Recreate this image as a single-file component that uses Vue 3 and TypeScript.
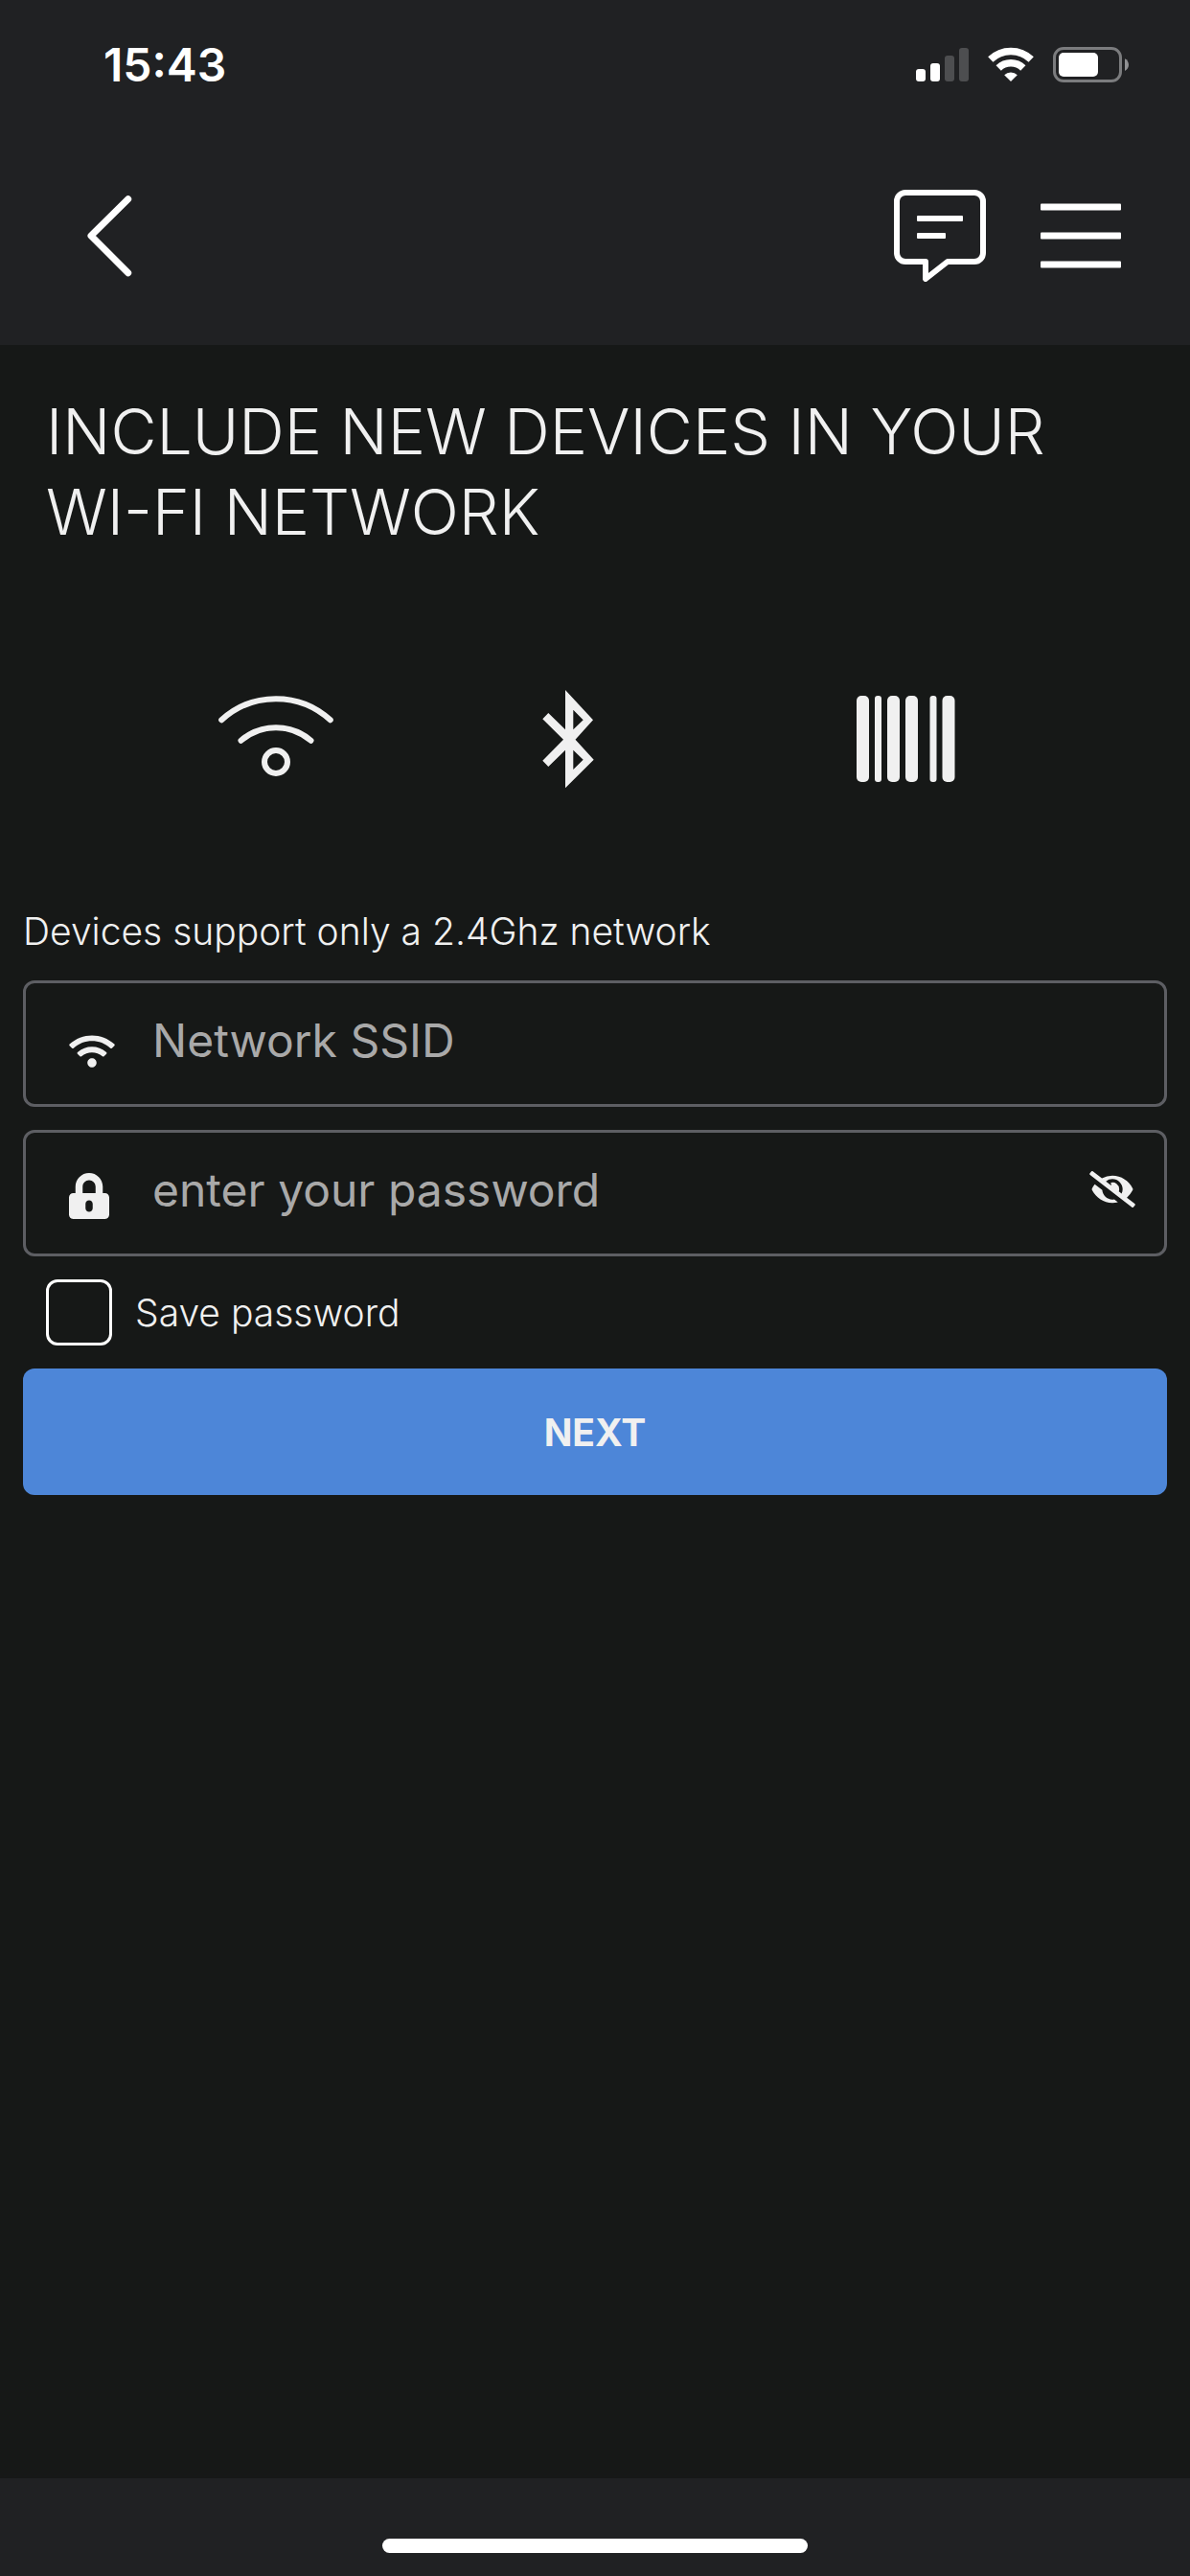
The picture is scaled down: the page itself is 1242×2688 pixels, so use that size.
<script setup lang="ts">
import { ref } from 'vue'

interface SignalBar {
  x: number
  height: number
  active: boolean
}

interface Stripe {
  x: number
  width: number
}

const signalBars: SignalBar[] = [
  { x: 0, height: 13, active: true },
  { x: 15, height: 19, active: true },
  { x: 30, height: 27, active: false },
  { x: 45, height: 35, active: false },
]

const stripes: Stripe[] = [
  { x: 0, width: 13 },
  { x: 19, width: 7 },
  { x: 32, width: 13 },
  { x: 51, width: 13 },
  { x: 76.5, width: 7 },
  { x: 89.5, width: 13 },
]

const ssid = ref('')
const password = ref('')
const savePassword = ref(false)
const passwordVisible = ref(false)
</script>

<template>
  <div class="screen">
    <header class="top">
      <div class="status">
        <time class="clock">15:43</time>
        <div class="indicators">
          <svg class="signal" width="55" height="38" viewBox="0 0 55 38" aria-hidden="true">
            <rect
              v-for="bar in signalBars"
              :key="bar.x"
              :x="bar.x"
              :y="36 - bar.height"
              width="10"
              :height="bar.height"
              rx="3"
              :fill="bar.active ? '#fff' : '#4d4e50'"
            />
          </svg>
          <svg width="48" height="38" viewBox="0 0 48 38" aria-hidden="true">
            <g fill="none" stroke="#fff" stroke-width="7.6">
              <path d="M2.8 13A30.5 30.5 0 0 1 45.2 13" />
              <path d="M11.2 22A18.3 18.3 0 0 1 36.8 22" />
            </g>
            <path d="M24 36L17.2 29.2A9.6 9.6 0 0 1 30.8 29.2Z" fill="#fff" />
          </svg>
          <svg width="80" height="38" viewBox="0 0 80 38" aria-hidden="true">
            <rect x="1.5" y="1.5" width="69" height="34" rx="9.5" fill="none" stroke="#7b7c7e" stroke-width="3" />
            <rect x="6" y="6" width="41" height="25" rx="5" fill="#fff" />
            <path d="M75 12.2C80.3 14.5 80.3 22.7 75 25Z" fill="#909193" />
          </svg>
        </div>
      </div>
      <nav class="toolbar">
        <button type="button" class="tool" aria-label="Back">
          <svg width="48" height="96" viewBox="0 0 48 96" fill="none" stroke="#fff" stroke-width="7" stroke-linecap="round" stroke-linejoin="round">
            <path d="M43.7 9.7L5 48L43.7 86.7" />
          </svg>
        </button>
        <div class="actions">
          <button type="button" class="tool" aria-label="Messages">
            <svg width="96" height="96" viewBox="0 0 96 96" fill="none" stroke="#fff" stroke-width="6" stroke-linejoin="round">
              <path d="M33 93V75H12A9 9 0 0 1 3 66V12A9 9 0 0 1 12 3H84A9 9 0 0 1 93 12V66A9 9 0 0 1 84 75H56Z" />
              <rect x="24" y="27" width="48" height="6" rx="1" fill="#fff" stroke="none" />
              <rect x="24" y="45" width="30" height="6" rx="1" fill="#fff" stroke="none" />
            </svg>
          </button>
          <button type="button" class="tool" aria-label="Menu">
            <svg width="84" height="96" viewBox="0 0 84 96" fill="#fff">
              <rect y="14.5" width="84" height="7" rx="1" />
              <rect y="44.5" width="84" height="7" rx="1" />
              <rect y="74.5" width="84" height="7" rx="1" />
            </svg>
          </button>
        </div>
      </nav>
    </header>

    <main class="content">
      <h1 class="title">INCLUDE NEW DEVICES IN YOUR WI-FI NETWORK</h1>

      <div class="methods">
        <button type="button" class="tool" aria-label="Wi-Fi">
          <svg width="120" height="120" viewBox="0 0 120 120" fill="none" stroke="#f0f0f0" stroke-width="6" stroke-linecap="round">
            <path d="M3.2 40.3A84 84 0 0 1 116.8 40.3" />
            <path d="M23.5 61.7A56 56 0 0 1 96.5 61.7" />
            <circle cx="60" cy="84" r="12" />
          </svg>
        </button>
        <button type="button" class="tool" aria-label="Bluetooth">
          <svg width="120" height="120" viewBox="0 0 120 120" fill="#f0f0f0" fill-rule="evenodd">
            <path d="M29 9L58 40.3L39.5 60.7L58.7 81.7L29 111.3V71.7L11.3 89L5.3 82.7L27 60.7L5.3 39.3L11.3 33L29 50.3ZM37.3 29.7V50.3L47.7 40.3ZM37.3 71.7V92L47.7 81.7Z" />
          </svg>
        </button>
        <button type="button" class="tool" aria-label="Barcode">
          <svg width="120" height="120" viewBox="0 0 120 120" fill="#f0f0f0">
            <rect
              v-for="stripe in stripes"
              :key="stripe.x"
              :x="stripe.x"
              y="15"
              :width="stripe.width"
              height="90"
              :rx="stripe.width > 10 ? 5 : 3"
            />
          </svg>
        </button>
      </div>

      <form class="form" @submit.prevent>
        <p class="hint">Devices support only a 2.4Ghz network</p>

        <div class="field">
          <span class="field-icon">
            <svg width="48" height="38" viewBox="0 0 640 512" fill="#f0f0f0" aria-hidden="true">
              <path d="M634.91 154.88C457.74-8.99 182.19-8.93 5.09 154.88c-6.66 6.16-6.79 16.59-.35 22.98l34.24 33.97c6.14 6.1 16.02 6.23 22.4.38 145.92-133.68 371.3-133.71 517.25 0 6.38 5.85 16.26 5.71 22.4-.38l34.24-33.97c6.43-6.39 6.3-16.82-.36-22.98zM320 352c-35.35 0-64 28.65-64 64s28.65 64 64 64 64-28.65 64-64-28.65-64-64-64zm202.67-83.59c-115.26-101.93-290.21-101.82-405.34 0-6.9 6.1-7.12 16.69-.57 23.15l34.44 33.99c6 5.92 15.66 6.32 22.05.8 83.95-72.57 209.74-72.41 293.49 0 6.39 5.52 16.05 5.13 22.05-.8l34.44-33.99c6.56-6.46 6.33-17.06-.56-23.15z" />
            </svg>
          </span>
          <input v-model="ssid" class="text-input" type="text" placeholder="Network SSID" aria-label="Network SSID" />
        </div>

        <div class="field">
          <span class="field-icon">
            <svg width="42" height="48" viewBox="0 0 448 512" fill="#f0f0f0" aria-hidden="true">
              <path d="M400 224h-24v-72C376 68.2 307.8 0 224 0S72 68.2 72 152v72H48c-26.5 0-48 21.5-48 48v192c0 26.5 21.5 48 48 48h352c26.5 0 48-21.5 48-48V272c0-26.5-21.5-48-48-48zM264 392c0 22.1-17.9 40-40 40s-40-17.9-40-40v-48c0-22.1 17.9-40 40-40s40 17.9 40 40v48zm32-168H152v-72c0-39.7 32.3-72 72-72s72 32.3 72 72v72z" />
            </svg>
          </span>
          <input
            v-model="password"
            class="text-input"
            :type="passwordVisible ? 'text' : 'password'"
            placeholder="enter your password"
            aria-label="Password"
          />
          <button type="button" class="tool reveal" aria-label="Show password" @click="passwordVisible = !passwordVisible">
            <svg width="48" height="38" viewBox="0 0 640 512" fill="#f0f0f0">
              <path d="M320 400c-75.85 0-137.25-58.71-142.9-133.11L72.2 185.82c-13.79 17.3-26.48 35.59-36.72 55.59a32.35 32.35 0 0 0 0 29.19C89.71 376.41 197.07 448 320 448c26.91 0 52.87-4 77.89-10.46L346 397.39a144.13 144.13 0 0 1-26 2.61zm313.82 58.1l-110.55-85.44a331.25 331.25 0 0 0 81.25-102.07 32.35 32.35 0 0 0 0-29.19C550.29 135.59 442.93 64 320 64a308.15 308.15 0 0 0-147.32 37.7L45.46 3.37A16 16 0 0 0 23 6.18L3.37 31.45A16 16 0 0 0 6.18 53.9l588.36 454.73a16 16 0 0 0 22.46-2.81l19.64-25.27a16 16 0 0 0-2.82-22.45zm-183.72-142l-39.3-30.38A94.75 94.75 0 0 0 416 256a94.76 94.76 0 0 0-121.31-92.21A47.65 47.65 0 0 1 304 192a46.64 46.64 0 0 1-1.54 10l-73.61-56.89A142.31 142.31 0 0 1 320 112a143.92 143.92 0 0 1 144 144c0 21.63-5.29 41.79-13.9 60.11z" />
            </svg>
          </button>
        </div>

        <label class="save">
          <input v-model="savePassword" class="checkbox" type="checkbox" />
          <span>Save password</span>
        </label>

        <button type="submit" class="next">NEXT</button>
      </form>
    </main>

    <footer class="bottom">
      <div class="home-bar"></div>
    </footer>
  </div>
</template>

<style>
body {
  background: #161817;
}
</style>

<style scoped>
.screen {
  display: flex;
  flex-direction: column;
  min-height: 100vh;
  background: #161817;
  color: #f0f0f0;
  font-family: Inter, "Liberation Sans", sans-serif;
  font-weight: 300;
  font-optical-sizing: none;
}

.screen * {
  box-sizing: border-box;
}

svg {
  display: block;
}

.tool {
  flex: none;
  padding: 0;
  border: 0;
  background: none;
  cursor: pointer;
}

.top {
  background: #202123;
  padding-bottom: 66px;
}

.status {
  display: flex;
  align-items: center;
  justify-content: space-between;
  height: 136px;
  padding: 0 63px 0 108px;
}

.clock {
  color: #fff;
  font-size: 48px;
  line-height: 60px;
  font-weight: 600;
}

.indicators {
  display: flex;
  gap: 20px;
}

.toolbar {
  display: flex;
  align-items: center;
  justify-content: space-between;
  padding: 62px 72px 0 90px;
}

.actions {
  display: flex;
  gap: 57px;
}

.content {
  flex: 1;
}

.title {
  margin: 0;
  padding: 48px 48px 0;
  font-size: 66px;
  line-height: 84px;
  font-weight: 300;
}

.methods {
  display: flex;
  justify-content: space-between;
  padding: 135px 228px 0;
}

.form {
  display: flex;
  flex-direction: column;
  gap: 24px;
  padding: 114px 24px 0;
}

.hint {
  margin: 0;
  font-size: 39px;
  line-height: 54px;
  font-weight: 300;
}

.field {
  display: flex;
  align-items: flex-end;
  height: 132px;
  padding: 0 30px 36px 45px;
  border: 3px solid #5d5e63;
  border-radius: 12px;
}

.field-icon {
  flex: none;
  width: 87px;
}

.text-input {
  flex: 1;
  min-width: 0;
  height: 60px;
  padding: 0;
  border: 0;
  outline: 0;
  background: none;
  color: #f0f0f0;
  font: inherit;
  font-size: 48px;
  font-weight: 400;
  line-height: 60px;
}

.text-input::placeholder {
  color: #a9a9a9;
  opacity: 1;
}

.reveal {
  margin-bottom: 12px;
}

.save {
  display: flex;
  align-items: center;
  gap: 24px;
  padding-left: 24px;
  font-size: 39px;
  line-height: 48px;
}

.checkbox {
  appearance: none;
  width: 69px;
  height: 69px;
  margin: 0;
  border: 3px solid #fff;
  border-radius: 12px;
}

.checkbox:checked {
  background: #4d86d8;
}

.next {
  height: 132px;
  border: 0;
  border-radius: 12px;
  background: #4d86d8;
  color: #f0f0f0;
  font: inherit;
  font-size: 39px;
  font-weight: 700;
  cursor: pointer;
}

.bottom {
  display: flex;
  justify-content: center;
  padding: 63px 0 24px;
  background: #202123;
}

.home-bar {
  width: 444px;
  height: 15px;
  border-radius: 8px;
  background: #fff;
}
</style>
